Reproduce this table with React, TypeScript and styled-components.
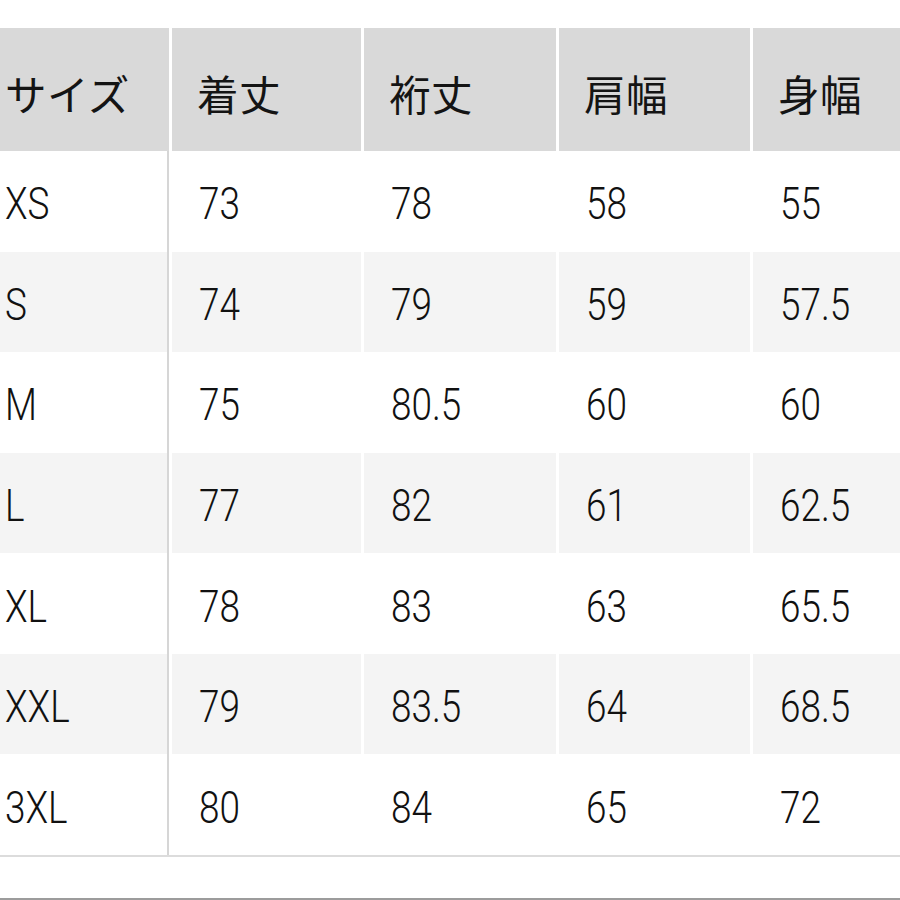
import React from "react";
import styled, { createGlobalStyle } from "styled-components";

const Global = createGlobalStyle`
  html, body { margin: 0; padding: 0; background: #ffffff; }
  body { width: 900px; height: 900px; overflow: hidden; }
`;

const Page = styled.div`
  width: 900px;
  height: 900px;
  box-sizing: border-box;
  padding-top: 28px;
  display: flex;
  flex-direction: column;
  background: #ffffff;
`;

const Table = styled.div`
  display: flex;
  flex-direction: column;
  border-bottom: 2px solid #dcdcdc;
`;

const cols = "169px 189px 192px 191px 1fr";

const HeaderRow = styled.div`
  display: grid;
  grid-template-columns: ${cols};
  column-gap: 3px;
  height: 123px;
`;

const HeaderCell = styled.div<{ $first?: boolean }>`
  background: #d9d9d9;
  display: flex;
  align-items: center;
  box-sizing: border-box;
  padding: 6px 0 0 ${(p) => (p.$first ? "5px" : "25px")};
  font-family: "Noto Sans CJK JP", "Noto Sans", sans-serif;
  font-size: 41.5px;
  font-weight: 400;
  color: #141414;
  letter-spacing: 0.5px;
`;

const Row = styled.div<{ $striped: boolean }>`
  display: grid;
  grid-template-columns: ${cols};
  column-gap: 3px;
  height: 100.57px;
  --cell-bg: ${(p) => (p.$striped ? "#f4f4f4" : "#ffffff")};
`;

const Cell = styled.div<{ $first?: boolean }>`
  background: var(--cell-bg);
  display: flex;
  align-items: center;
  box-sizing: border-box;
  padding: 5px 0 0 ${(p) => (p.$first ? "5px" : "27px")};
  border-right: ${(p) => (p.$first ? "2px solid #d6d6d6" : "none")};
  overflow: hidden;
`;

const Value = styled.span`
  display: inline-block;
  font-family: Roboto, "Liberation Sans", sans-serif;
  font-size: 45px;
  font-weight: 300;
  color: #111111;
  transform: scaleX(0.82);
  transform-origin: left center;
  white-space: nowrap;
`;

const Footer = styled.div`
  flex: 1;
  border-bottom: 2px solid #9c9c9c;
`;

const headers = ["サイズ", "着丈", "裄丈", "肩幅", "身幅"];

const rows: string[][] = [
  ["XS", "73", "78", "58", "55"],
  ["S", "74", "79", "59", "57.5"],
  ["M", "75", "80.5", "60", "60"],
  ["L", "77", "82", "61", "62.5"],
  ["XL", "78", "83", "63", "65.5"],
  ["XXL", "79", "83.5", "64", "68.5"],
  ["3XL", "80", "84", "65", "72"],
];

export default function App() {
  return (
    <>
      <Global />
      <Page>
        <Table>
          <HeaderRow>
            {headers.map((h, i) => (
              <HeaderCell key={h} $first={i === 0}>
                {h}
              </HeaderCell>
            ))}
          </HeaderRow>
          {rows.map((r, ri) => (
            <Row key={r[0]} $striped={ri % 2 === 1}>
              {r.map((v, ci) => (
                <Cell key={ci} $first={ci === 0}>
                  <Value>{v}</Value>
                </Cell>
              ))}
            </Row>
          ))}
        </Table>
        <Footer />
      </Page>
    </>
  );
}
